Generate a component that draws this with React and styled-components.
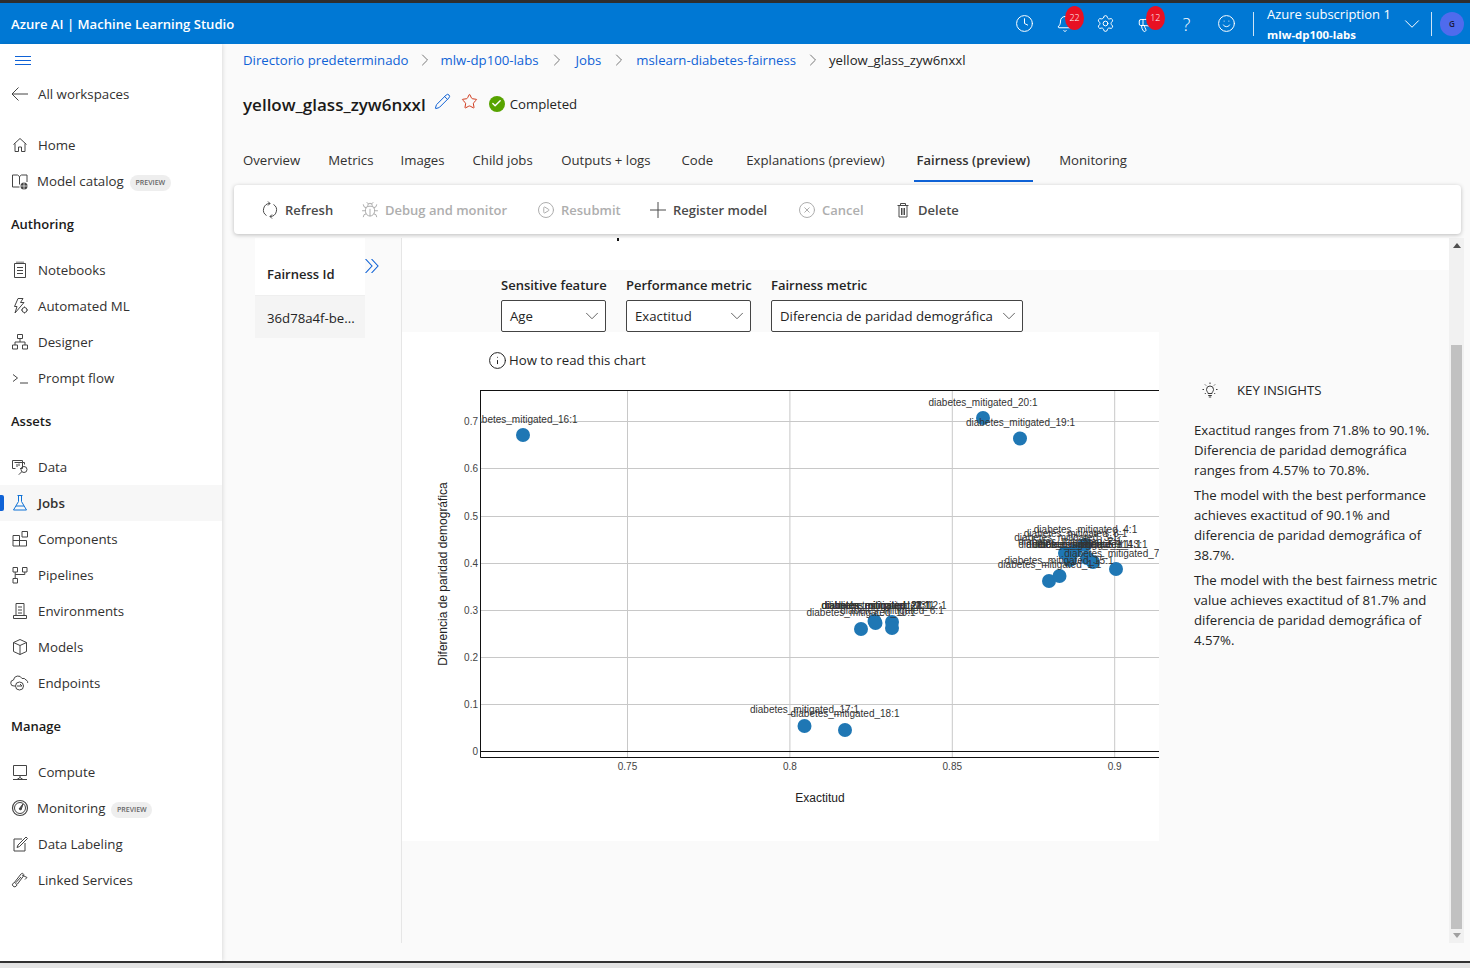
import React from 'react';
import styled, { createGlobalStyle } from 'styled-components';
import { Clock, Bell, Settings, Megaphone, Smile, ChevronDown, ChevronRight, Pencil, Star, Check, Bug, CirclePlay, Plus, CircleX, Info } from 'lucide-react';

const GlobalStyle = createGlobalStyle`
  html, body { margin: 0; padding: 0; background: #fafafa; }
  * { box-sizing: border-box; }
  body { font-family: "Open Sans", "Noto Sans", "Liberation Sans", sans-serif; font-size: 13.2px; color: #242424; }
`;

const thin = { strokeWidth: 1, absoluteStrokeWidth: true };

const Frame = styled.div`
  width: 1470px;
  height: 968px;
  display: flex;
  flex-direction: column;
  overflow: hidden;
`;
const TopStrip = styled.div`
  height: 3px;
  background: #2e2e2e;
`;
const Header = styled.header`
  height: 41px;
  background: #0078d4;
  color: #fff;
  display: flex;
  align-items: center;
  padding-left: 11px;
`;
const Brand = styled.div`
  font-size: 13.1px;
  font-weight: 600;
  flex: 1;
`;
const HeaderIcons = styled.div`
  display: flex;
  align-items: center;
  margin-right: 6px;
`;
const HeaderButton = styled.div`
  position: relative;
  width: 40.4px;
  height: 41px;
  display: flex;
  align-items: center;
  justify-content: center;
  font-size: 18px;
  font-weight: 300;
`;
const Badge = styled.span`
  position: absolute;
  left: 20px;
  top: 3px;
  width: 19px;
  height: 24px;
  border-radius: 50%;
  background: #e81123;
  font-size: 9px;
  line-height: 24px;
  text-align: center;
`;
const HeaderDivider = styled.div`
  width: 1px;
  height: 24px;
  background: #cfe4f5;
`;
const Subscription = styled.div`
  width: 177px;
  padding: 0 6px 0 13px;
  display: flex;
  align-items: center;
  justify-content: space-between;
`;
const SubText = styled.div`
  font-size: 13px;
  line-height: 19px;
  padding-top: 2px;
  white-space: nowrap;
  b { font-size: 11.4px; font-weight: 700; display: block; margin-top: 1px; }
`;
const Avatar = styled.div`
  width: 24px;
  height: 24px;
  margin: 0 6px 0 8px;
  border-radius: 50%;
  background: #4f6bed;
  color: #1b1b3a;
  font-size: 8px;
  font-weight: 600;
  display: flex;
  align-items: center;
  justify-content: center;
`;

const Body = styled.div`
  flex: 1;
  display: flex;
  min-height: 0;
`;
const Sidebar = styled.nav`
  width: 222px;
  background: #fff;
  box-shadow: 1px 0 4px rgba(0, 0, 0, 0.12);
  z-index: 2;
  padding-top: 5px;
`;
const Burger = styled.div`
  height: 22px;
  padding-left: 15px;
  display: flex;
  align-items: center;
`;
const NavRow = styled.div`
  position: relative;
  height: 36px;
  display: flex;
  align-items: center;
  gap: ${({ $tight }) => ($tight ? 7 : 8)}px;
  padding-left: 10px;
  font-size: 13.3px;
  color: #323130;
  font-weight: ${({ $active }) => ($active ? 600 : 400)};
  background: ${({ $active }) => ($active ? '#f7f7f7' : 'transparent')};
  margin-top: ${({ $top }) => $top || 0}px;
  &::before {
    content: '';
    display: ${({ $active }) => ($active ? 'block' : 'none')};
    position: absolute;
    left: 0;
    top: 10px;
    width: 4px;
    height: 16px;
    border-radius: 0 2px 2px 0;
    background: #0f62d6;
  }
`;
const NavGroup = styled.div`
  height: 36px;
  display: flex;
  align-items: center;
  padding-left: 11px;
  font-size: 13px;
  font-weight: 600;
  color: #1b1a19;
  margin: ${({ $top }) => $top}px 0 ${({ $bottom }) => $bottom}px;
`;
const Preview = styled.span`
  font-size: 7px;
  font-weight: 600;
  color: #666;
  background: #eeeeee;
  border-radius: 8px;
  height: 16px;
  margin: 4px 0 0 -1px;
  width: 41px;
  text-align: center;
  line-height: 16px;
`;

const Main = styled.main`
  flex: 1;
  background: #fafafa;
  display: flex;
  flex-direction: column;
  min-width: 0;
`;
const Crumbs = styled.div`
  height: 31px;
  padding-left: 21px;
  display: flex;
  align-items: center;
  color: #0f62d6;
  span { color: #242424; }
`;
const CrumbSep = styled(ChevronRight)`
  margin: 0 ${({ $m }) => $m}px;
  color: #777;
`;
const TitleRow = styled.div`
  height: 56px;
  padding-left: 21px;
  display: flex;
  align-items: center;
`;
const Title = styled.h1`
  margin: 2px 0 0;
  font-size: 17px;
  font-weight: 600;
  color: #1b1a19;
`;
const Status = styled.div`
  display: flex;
  align-items: center;
  gap: 5px;
  margin: 1px 0 0 11px;
`;
const StatusDot = styled.span`
  width: 16px;
  height: 16px;
  border-radius: 50%;
  background: #57a300;
  color: #fff;
  display: flex;
  align-items: center;
  justify-content: center;
`;
const TitleIcon = styled.span`
  display: flex;
  margin-left: ${({ $left }) => $left}px;
  margin-bottom: 4px;
`;
const Tabs = styled.div`
  height: 45px;
  padding: 0 0 0 18px;
  display: flex;
  margin-top: 8px;
`;
const Tab = styled.div`
  height: 43px;
  padding: 0 3px;
  margin-right: ${({ $gap }) => $gap}px;
  display: flex;
  align-items: center;
  color: #323130;
  font-weight: ${({ $active }) => ($active ? 600 : 400)};
  font-size: ${({ $active }) => ($active ? 13 : 13.2)}px;
  border-bottom: 2px solid ${({ $active }) => ($active ? '#0f62d6' : 'transparent')};
`;
const Toolbar = styled.div`
  margin: 1px 0 0 12px;
  width: 1227px;
  height: 49px;
  flex: none;
  background: #fff;
  border-radius: 4px;
  box-shadow: 0 1px 4px rgba(0, 0, 0, 0.25);
  display: flex;
  align-items: center;
  padding-left: 27px;
  z-index: 1;
`;
const ToolItem = styled.div`
  display: flex;
  align-items: center;
  gap: 6px;
  width: ${({ $w }) => $w}px;
  font-size: 13px;
  font-weight: 600;
  color: ${({ $off }) => ($off ? '#aeaeae' : '#4a4a4a')};
`;
const Content = styled.div`
  margin-top: 4px;
  height: 705px;
  display: flex;
  padding-left: 33px;
`;
const FairnessColumn = styled.div`
  width: 110px;
`;
const FairnessHead = styled.div`
  height: 58px;
  padding: 14px 12px 0;
  background: #fff;
  border-bottom: 1px solid #efefef;
  display: flex;
  align-items: center;
  font-size: 13px;
  font-weight: 600;
`;
const FairnessCell = styled.div`
  height: 42px;
  padding: 1px 12px 0;
  background: #f4f4f4;
  display: flex;
  align-items: center;
  white-space: nowrap;
`;
const Expander = styled.div`
  width: 37px;
  border-right: 1px solid #e6e6e6;
  padding-top: 21px;
  svg { display: block; }
`;
const ChartArea = styled.div`
  position: relative;
  width: 1047px;
  display: flex;
  flex-direction: column;
`;
const Speck = styled.i`
  position: absolute;
  left: 215px;
  top: 0;
  width: 2px;
  height: 3px;
  background: #111;
`;
const WhiteBand = styled.div`
  height: 32px;
  background: #fff;
`;
const Filters = styled.div`
  height: 62px;
  padding-left: 99px;
  display: flex;
  gap: 20px;
  align-items: flex-end;
`;
const Field = styled.div`
  width: ${({ $w }) => $w}px;
`;
const FieldLabel = styled.div`
  font-size: 13px;
  font-weight: 600;
  height: 30px;
  display: flex;
  align-items: center;
  white-space: nowrap;
`;
const SelectBox = styled.div`
  height: 32px;
  border: 1px solid #444;
  border-radius: 2px;
  background: #fff;
  padding: 0 8px;
  display: flex;
  align-items: center;
  justify-content: space-between;
  white-space: nowrap;
  svg { color: #666; margin-right: -6px; flex: none; }
`;
const Lower = styled.div`
  display: flex;
`;
const ChartPanel = styled.div`
  width: 757px;
  height: 509px;
  background: #fff;
`;
const ReadRow = styled.div`
  height: 56px;
  padding-left: 86px;
  display: flex;
  align-items: center;
  gap: 2px;
`;
const Plot = styled.svg`
  display: block;
  text { font-family: "Liberation Sans", Arial, sans-serif; }
`;
const Insights = styled.aside`
  width: 256px;
  margin-left: 35px;
  padding-top: 48px;
  line-height: 20px;
  p { margin: 0 0 5px; }
`;
const InsightHead = styled.div`
  display: flex;
  align-items: center;
  gap: 19px;
  padding-left: 8px;
  height: 20px;
  margin-bottom: 20px;
`;
const Scrollbar = styled.div`
  width: 15px;
  background: #f1f1f1;
  display: flex;
  flex-direction: column;
  align-items: center;
  padding-top: 5px;
`;
const Arrow = styled.i`
  width: 0;
  height: 0;
  border-left: 4px solid transparent;
  border-right: 4px solid transparent;
  ${({ $down }) => ($down ? 'border-top: 5px solid #a0a0a0; margin: auto 0 5px;' : 'border-bottom: 5px solid #505050;')}
`;
const Thumb = styled.div`
  width: 11px;
  height: 584px;
  margin-top: 97px;
  background: #c1c1c1;
`;
const BottomStrip = styled.div`
  height: 7px;
  border-top: 2px solid #333;
  background: #e4e4e4;
`;

const NavIcon = ({ children, color = '#444' }) => (
  <svg width="20" height="20" viewBox="0 0 20 20" fill="none" stroke={color} strokeWidth="1" style={{ flex: 'none' }}>
    {children}
  </svg>
);

const icons = {
  back: <path d="M2 10h16M8.500 3.500 2 10l6.500 6.500" />,
  home: <path d="M3.500 9.500 10 3.500l6.500 6M5 8.500v8h3.500v-4.500h3v4.500H15v-8" />,
  catalog: <><path d="M9.500 16H2.500V4h5l2 1.500L11.500 4h5.500v7M9.500 5.500v8" /><circle cx="14" cy="15" r="3.500" fill="#444" stroke="none" /><path d="M10.500 15h7M14 11.500v7" stroke="#fff" strokeWidth=".7" /></>,
  notebooks: <path d="M4.500 3.500h11v14h-11zM7 1.500v2M9 1.500v2M11 1.500v2M13 1.500v2M7 7.500h6M7 10.500h6M7 13.500h6" />,
  automl: <><path d="M8 2.500h5l-2.500 4h3.500L5 17l2-6.500H4.500z" /><circle cx="14.500" cy="14" r="2.500" /><path d="M14.500 10.500v1M14.500 16.500v1M11 14h1M17 14h1" /></>,
  designer: <path d="M7.500 2.500h5v4h-5zM2.500 13h5v4h-5zM12.500 13h5v4h-5zM10 6.500V10M5 13v-3h10v3" />,
  prompt: <path d="m3 6.500 4.500 3.500L3 13.500M10 15h8" />,
  data: <><path d="M2.500 3.500h10v8H10M2.500 3.500v8h3" /><path d="M4.500 5.500h10v2M7 7v3M9 6.500V9" /><circle cx="14" cy="12.500" r="3" /><path d="m11.800 14.700-3 3" /></>,
  jobs: <path d="M7.500 2.500h5M8.500 2.500v6L3.500 17h13L11.500 8.500v-6M6 13h8" />,
  components: <path d="M3 6.500h6.500V17H3zM3 11.500h13.500V17h-7M12 2.500h5.500V8H12z" />,
  pipelines: <path d="M3 2.500h4.500V7H3zM12.500 2.500H17V7h-4.500zM3 13.500h4.500V18H3zM5.200 7v6.500M14.800 7v2.500H5.200" />,
  environments: <path d="M6 2.500h8v12H6zM8 6h4M8 9h4M8 12h4M3.500 14.500v3h13v-3h-2.500M6 14.500H3.500" />,
  models: <path d="M10 2.500 3.500 5.500v9L10 17.500l6.500-3v-9zM3.500 5.500 10 8.500l6.500-3M10 8.500v9" />,
  endpoints: <><path d="M5 13H4a3 3 0 0 1-.5-6 4.500 4.500 0 0 1 8.500-1.500A3.500 3.500 0 0 1 16 7c1.500.5 2 2 1.500 3" /><circle cx="9.500" cy="13" r="4" /><path d="M7 13h5l-2-2" /></>,
  compute: <path d="M3.500 3.500h13v10h-13zM10 13.500v2M3 17.500h14M7 17.500l3-2 3 2" />,
  monitoring: <><circle cx="10" cy="10" r="7.500" strokeWidth="1.200" /><circle cx="10" cy="10" r="5.500" /><path d="m9 11 4-5-2 6z" fill="#444" /></>,
  labeling: <path d="M15 9v8H4V5h8M16 3l1.500 1.500-8 8-2.500 1 1-2.500z" />,
  linked: <path d="M3 16c-1.500-1.500 0-3 1-3l7-9c1.500-1.500 3.500 0 2.500 2l-6 8c-1 1-2.500 0-1.500-1.500L11 7M12 5l5 2.500-2 2M7 15c-1 2-3 2.500-4 1" />,
};

const NavItem = ({ icon, label, active, preview, top, color }) => (
  <NavRow $active={active} $top={top} $tight={preview}>
    <NavIcon color={color}>{icons[icon]}</NavIcon>
    {label}
    {preview && <Preview>PREVIEW</Preview>}
  </NavRow>
);

const xOf = (v) => 627.5 + (v - 0.75) * 3248;
const yOf = (v) => Math.round(751 - v * 471) + 0.5;

const points = [
  [523, 435], [983, 418], [1020, 438.5], [1116, 569], [1049, 581], [1059.5, 576],
  [1093, 562], [1087, 558], [1085, 545], [1070, 560], [1065, 553], [1075, 551],
  [861, 629], [875.5, 623], [874.5, 621], [892, 622], [892, 628],
  [804.5, 726], [845, 730],
];

const labels = [
  ['16:1', 523, 423], ['20:1', 983, 406], ['19:1', 1020.5, 426],
  ['4:1', 1085.5, 533], ['8:1', 1075.5, 537], ['3:1', 1066, 541], ['2:1', 1070, 545],
  ['5:1', 1070, 548], ['9:1', 1078, 548], ['14:1', 1087, 548], ['13:1', 1093, 548],
  ['7:1', 1116, 557], ['15:1', 1059, 564], ['1:1', 1049.5, 568],
  ['11:1', 875.5, 609], ['21:1', 876, 609], ['22:1', 876, 609], ['23:1', 880, 609], ['12:1', 892, 609],
  ['6:1', 892, 614], ['10:1', 861, 616],
  ['17:1', 804.5, 713], ['18:1', 845, 717],
];

const Chart = () => (
  <Plot width="757" height="453" viewBox="402 388 757 453">
    <defs>
      <clipPath id="plotClip"><rect x="480" y="390" width="679" height="368" /></clipPath>
    </defs>
    {[0.75, 0.8, 0.85, 0.9].map((v) => (
      <g key={v}>
        <line x1={xOf(v)} x2={xOf(v)} y1="390" y2="757" stroke="#c8c8c8" />
        <text x={xOf(v)} y="770" fontSize="10" textAnchor="middle" fill="#444">{v}</text>
      </g>
    ))}
    {[0.1, 0.2, 0.3, 0.4, 0.5, 0.6, 0.7].map((v) => (
      <g key={v}>
        <line x1="480" x2="1159" y1={yOf(v)} y2={yOf(v)} stroke="#c8c8c8" />
        <text x="478" y={yOf(v) + 3} fontSize="10" textAnchor="end" fill="#444">{v}</text>
      </g>
    ))}
    <text x="478" y="754.5" fontSize="10" textAnchor="end" fill="#444">0</text>
    <path d="M480.5 390V757.5H1159M480 390.5H1159M480 751.5H1159" fill="none" stroke="#111" />
    <g clipPath="url(#plotClip)">
      {points.map(([x, y], i) => <circle key={i} cx={x} cy={y} r="7" fill="#1f77b4" />)}
      {labels.map(([n, x, y]) => (
        <text key={n} x={x} y={y} fontSize="10" textAnchor="middle" fill="#333">diabetes_mitigated_{n}</text>
      ))}
    </g>
    <text x="820" y="802" fontSize="12" textAnchor="middle" fill="#222">Exactitud</text>
    <text transform="translate(447 574) rotate(-90)" fontSize="12" textAnchor="middle" fill="#222">Diferencia de paridad demográfica</text>
  </Plot>
);

const tabs = [
  ['Overview', 22], ['Metrics', 21], ['Images', 22], ['Child jobs', 22.5], ['Outputs + logs', 25],
  ['Code', 27], ['Explanations (preview)', 26], ['Fairness (preview)', 23], ['Monitoring', 0],
];

const RefreshIcon = () => (
  <svg width="18" height="18" viewBox="0 0 18 18" fill="none" stroke="currentColor"><path d="M9 2.500A6.500 6.500 0 0 0 5.500 14.500M7 .5l2 2-2 2M9 15.500A6.500 6.500 0 0 0 12.500 3.500M11 17.500l-2-2 2-2" /></svg>
);

const TrashIcon = () => (
  <svg width="18" height="18" viewBox="0 0 18 18" fill="none" stroke="currentColor"><path d="M3.500 4.500h11M6.500 4.500v-2h5v2M5 4.500v11.500h8V4.500M7.500 7v7M9 7v7M10.500 7v7" /></svg>
);

const BulbIcon = () => (
  <svg width="16" height="16" viewBox="0 0 16 16" fill="none" stroke="#242424" strokeWidth=".9"><path d="M6 11.500c0-1.500-1.500-2-1.500-4a3.500 3.500 0 0 1 7 0c0 2-1.500 2.500-1.500 4zM6.200 13.500h3.600M6.800 15h2.400M8 .5v1.500M2 7.500H.5M15.500 7.500H14M3 2.500l1 1M13 2.500l-1 1M2.800 12l1-1M13.200 12l-1-1" /></svg>
);

const App = () => (
  <Frame>
    <GlobalStyle />
    <TopStrip />
    <Header>
      <Brand>Azure AI | Machine Learning Studio</Brand>
      <HeaderIcons>
        <HeaderButton><Clock size={19} {...thin} /></HeaderButton>
        <HeaderButton><Bell size={18} {...thin} /><Badge>22</Badge></HeaderButton>
        <HeaderButton><Settings size={19} {...thin} /></HeaderButton>
        <HeaderButton><Megaphone size={18} {...thin} /><Badge>12</Badge></HeaderButton>
        <HeaderButton>?</HeaderButton>
        <HeaderButton><Smile size={19} {...thin} /></HeaderButton>
      </HeaderIcons>
      <HeaderDivider />
      <Subscription>
        <SubText>Azure subscription 1<b>mlw-dp100-labs</b></SubText>
        <ChevronDown size={26} {...thin} />
      </Subscription>
      <HeaderDivider />
      <Avatar>G</Avatar>
    </Header>
    <Body>
      <Sidebar>
        <Burger>
          <svg width="17" height="9" viewBox="0 0 17 9" stroke="#0f62d6"><path d="M0 .5h16M0 4.500h16M0 8.500h16" /></svg>
        </Burger>
        <NavItem icon="back" label="All workspaces" top={5} />
        <NavItem icon="home" label="Home" top={15} />
        <NavItem icon="catalog" label="Model catalog" preview />
        <NavGroup $top={7} $bottom={10}>Authoring</NavGroup>
        <NavItem icon="notebooks" label="Notebooks" />
        <NavItem icon="automl" label="Automated ML" />
        <NavItem icon="designer" label="Designer" />
        <NavItem icon="prompt" label="Prompt flow" />
        <NavGroup $top={7} $bottom={10}>Assets</NavGroup>
        <NavItem icon="data" label="Data" />
        <NavItem icon="jobs" label="Jobs" active color="#0f72d6" />
        <NavItem icon="components" label="Components" />
        <NavItem icon="pipelines" label="Pipelines" />
        <NavItem icon="environments" label="Environments" />
        <NavItem icon="models" label="Models" />
        <NavItem icon="endpoints" label="Endpoints" />
        <NavGroup $top={7} $bottom={10}>Manage</NavGroup>
        <NavItem icon="compute" label="Compute" />
        <NavItem icon="monitoring" label="Monitoring" preview />
        <NavItem icon="labeling" label="Data Labeling" />
        <NavItem icon="linked" label="Linked Services" />
      </Sidebar>
      <Main>
        <Crumbs>
          Directorio predeterminado<CrumbSep size={20} {...thin} $m={6} />
          mlw-dp100-labs<CrumbSep size={20} {...thin} $m={8.5} />
          Jobs<CrumbSep size={20} {...thin} $m={7.5} />
          mslearn-diabetes-fairness<CrumbSep size={20} {...thin} $m={6.5} />
          <span>yellow_glass_zyw6nxxl</span>
        </Crumbs>
        <TitleRow>
          <Title>yellow_glass_zyw6nxxl</Title>
          <TitleIcon $left={8}><Pencil size={17} {...thin} color="#0f62d6" /></TitleIcon>
          <TitleIcon $left={10}><Star size={17} {...thin} color="#d13c1f" /></TitleIcon>
          <Status><StatusDot><Check size={11} strokeWidth={3} /></StatusDot>Completed</Status>
        </TitleRow>
        <Tabs>
          {tabs.map(([name, gap]) => (
            <Tab key={name} $gap={gap} $active={name.startsWith('Fairness')}>{name}</Tab>
          ))}
        </Tabs>
        <Toolbar>
          <ToolItem $w={100}><RefreshIcon />Refresh</ToolItem>
          <ToolItem $w={176} $off><Bug size={18} {...thin} />Debug and monitor</ToolItem>
          <ToolItem $w={112} $off><CirclePlay size={18} {...thin} />Resubmit</ToolItem>
          <ToolItem $w={149}><Plus size={26} {...thin} style={{ margin: '0 -4px' }} />Register model</ToolItem>
          <ToolItem $w={96} $off><CircleX size={18} {...thin} />Cancel</ToolItem>
          <ToolItem $w={100}><TrashIcon />Delete</ToolItem>
        </Toolbar>
        <Content>
          <FairnessColumn>
            <FairnessHead>Fairness Id</FairnessHead>
            <FairnessCell>36d78a4f-be...</FairnessCell>
          </FairnessColumn>
          <Expander>
            <svg width="14" height="14" viewBox="0 0 14 14" fill="none" stroke="#0f62d6" strokeWidth="1.1"><path d="m.5 0 6.500 7-6.500 7M6.500 0 13 7l-6.500 7" /></svg>
          </Expander>
          <ChartArea>
            <Speck />
            <WhiteBand />
            <Filters>
              <Field $w={105}>
                <FieldLabel>Sensitive feature</FieldLabel>
                <SelectBox>Age<ChevronDown size={22} {...thin} /></SelectBox>
              </Field>
              <Field $w={125}>
                <FieldLabel>Performance metric</FieldLabel>
                <SelectBox>Exactitud<ChevronDown size={22} {...thin} /></SelectBox>
              </Field>
              <Field $w={252}>
                <FieldLabel>Fairness metric</FieldLabel>
                <SelectBox>Diferencia de paridad demográfica<ChevronDown size={22} {...thin} /></SelectBox>
              </Field>
            </Filters>
            <Lower>
              <ChartPanel>
                <ReadRow><Info size={19} {...thin} />How to read this chart</ReadRow>
                <Chart />
              </ChartPanel>
              <Insights>
                <InsightHead><BulbIcon />KEY INSIGHTS</InsightHead>
                <p>Exactitud ranges from 71.8% to 90.1%. Diferencia de paridad demográfica ranges from 4.57% to 70.8%.</p>
                <p>The model with the best performance achieves exactitud of 90.1% and diferencia de paridad demográfica of 38.7%.</p>
                <p>The model with the best fairness metric value achieves exactitud of 81.7% and diferencia de paridad demográfica of 4.57%.</p>
              </Insights>
            </Lower>
          </ChartArea>
          <Scrollbar>
            <Arrow />
            <Thumb />
            <Arrow $down />
          </Scrollbar>
        </Content>
      </Main>
    </Body>
    <BottomStrip />
  </Frame>
);

export default App;
